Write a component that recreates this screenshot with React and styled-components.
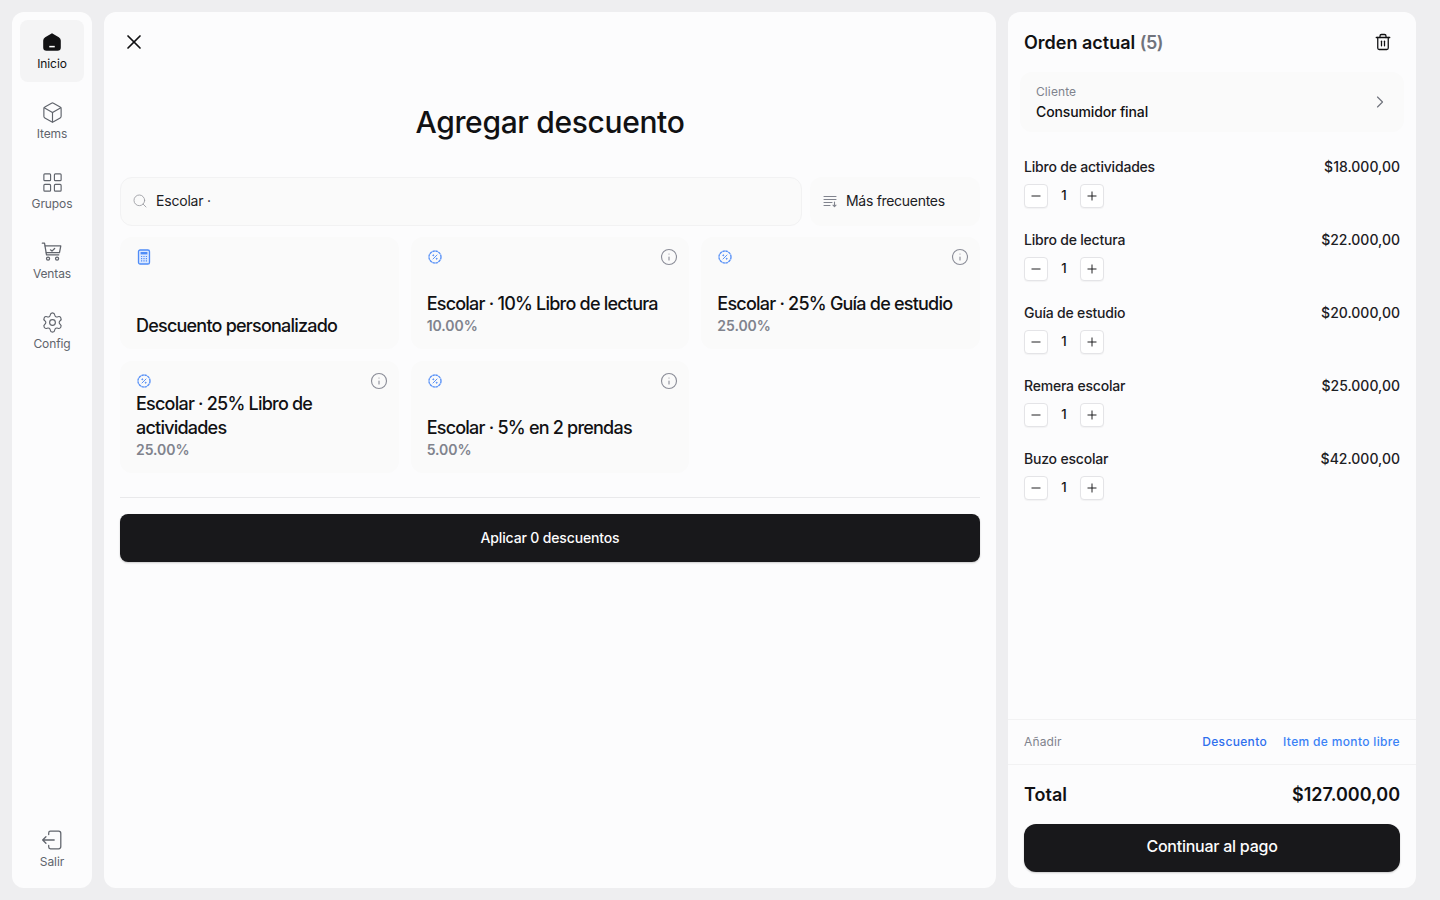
import React from "react";
import styled, { createGlobalStyle } from "styled-components";
import { Box, LayoutGrid, Settings, Search, X, Trash2, ChevronRight, Minus, Plus, Info } from "lucide-react";

const GlobalStyle = createGlobalStyle`
  * { box-sizing: border-box; }
  html, body { margin: 0; height: 100%; }
  body {
    background: #eeeef0;
    font-family: Inter, "Liberation Sans", sans-serif;
    color: #111113;
  }
`;

const Page = styled.div`
  display: grid;
  grid-template-columns: 80px 892px 408px;
  gap: 12px;
  width: 1440px;
  height: 900px;
  padding: 12px 24px 12px 12px;
`;

const Sidebar = styled.nav`
  background: #fcfcfd;
  border-radius: 12px;
  padding: 8px;
  display: flex;
  flex-direction: column;
  gap: 8px;
`;

const NavItem = styled.div`
  height: 62px;
  border-radius: 8px;
  display: flex;
  flex-direction: column;
  align-items: center;
  justify-content: center;
  gap: 4px;
  padding-top: 2px;
  font-size: 12px;
  line-height: 16px;
  letter-spacing: -0.1px;
  color: ${(p) => (p.$active ? "#111113" : "#60646c")};
  background: ${(p) => (p.$active ? "#f4f4f5" : "transparent")};
  &:last-child { margin-top: auto; }
`;

const NavIcon = styled.div`
  height: 20px;
  display: flex;
  align-items: center;
  justify-content: center;
`;

const Main = styled.main`
  background: #fcfcfd;
  border-radius: 12px;
  padding: 16px;
  display: flex;
  flex-direction: column;
`;

const CloseButton = styled.div`
  width: 28px;
  height: 28px;
  display: flex;
  align-items: center;
  justify-content: center;
`;

const Title = styled.h1`
  margin: 48px 0 37px;
  font-size: 30px;
  line-height: 36px;
  font-weight: 500;
  letter-spacing: -0.35px;
  text-align: center;
`;

const Filters = styled.div`
  display: flex;
  gap: 8px;
  height: 49px;
`;

const SearchBox = styled.div`
  flex: 1;
  display: flex;
  align-items: center;
  gap: 8px;
  padding: 0 0 2px 11px;
  background: #fafafa;
  border: 1px solid #f2f2f3;
  border-radius: 12px;
  font-size: 14px;
  letter-spacing: -0.2px;
  color: #1c2024;
  svg { color: #9a9ba1; }
`;

const SortBox = styled.div`
  width: 170px;
  display: flex;
  align-items: center;
  gap: 8px;
  padding: 0 0 2px 12px;
  background: #fafafa;
  border-radius: 12px;
  font-size: 14px;
  letter-spacing: -0.3px;
  color: #1c2024;
`;

const CardGrid = styled.div`
  display: grid;
  grid-template-columns: repeat(3, 1fr);
  grid-auto-rows: 112px;
  gap: 12px;
  margin-top: 11px;
  padding-bottom: 24px;
  border-bottom: 1px solid #e9e9eb;
`;

const Card = styled.div`
  background: #fafafa;
  border-radius: 12px;
  padding: 12px 11px ${(p) => (p.$custom ? "11px" : "13px")} 16px;
  display: flex;
  flex-direction: column;
`;

const CardTop = styled.div`
  display: flex;
  justify-content: space-between;
  align-items: center;
  height: 16px;
  svg.info { color: #8b8d98; }
`;

const CardBody = styled.div`
  margin-top: auto;
`;

const CardName = styled.div`
  font-size: 18px;
  line-height: 24px;
  font-weight: 500;
  letter-spacing: -0.78px;
`;

const CardValue = styled.div`
  font-size: 14px;
  line-height: 20px;
  font-weight: 600;
  letter-spacing: -0.05px;
  color: #80838d;
`;

const ApplyButton = styled.button`
  margin-top: 16px;
  height: 48px;
  flex: none;
  border: 0;
  border-radius: 8px;
  padding: 0 0 2px;
  background: #18181b;
  color: #fcfcfd;
  font: 500 14px Inter, sans-serif;
  letter-spacing: -0.15px;
  box-shadow: 0 1px 2px rgba(0, 0, 0, 0.2);
`;

const Order = styled.aside`
  background: #fcfcfd;
  border-radius: 12px;
  display: flex;
  flex-direction: column;
`;

const OrderHeader = styled.div`
  height: 60px;
  padding: 0 24px 0 16px;
  display: flex;
  align-items: center;
  justify-content: space-between;
`;

const OrderTitle = styled.h2`
  margin: 0;
  font-size: 18px;
  font-weight: 600;
  span { color: #70737c; letter-spacing: -0.5px; }
`;

const ClientRow = styled.div`
  margin: 0 12px;
  height: 60px;
  padding: 0 14px 0 16px;
  background: #fafafa;
  border-radius: 12px;
  display: flex;
  align-items: center;
  justify-content: space-between;
  svg { color: #70737c; }
`;

const ClientLabel = styled.div`
  font-size: 12px;
  line-height: 20px;
  letter-spacing: 0.1px;
  color: #80838d;
`;

const ClientName = styled.div`
  font-size: 14px;
  line-height: 20px;
  font-weight: 500;
  letter-spacing: -0.13px;
`;

const Items = styled.div`
  flex: 1;
  padding: 25px 16px 0;
  display: flex;
  flex-direction: column;
  gap: 22px;
`;

const ItemHead = styled.div`
  display: flex;
  justify-content: space-between;
  font-size: 14px;
  line-height: 20px;
  font-weight: 500;
  color: #1c2024;
  span:first-child { letter-spacing: -0.2px; }
`;

const Stepper = styled.div`
  display: flex;
  align-items: center;
  margin-top: 7px;
`;

const StepButton = styled.div`
  width: 24px;
  height: 24px;
  border: 1px solid #e4e4e7;
  border-radius: 4px;
  background: #fff;
  display: flex;
  align-items: center;
  justify-content: center;
  box-shadow: 0 1px 1px rgba(0, 0, 0, 0.04);
`;

const Quantity = styled.div`
  width: 32px;
  padding-bottom: 2px;
  text-align: center;
  font-size: 13px;
  font-weight: 500;
`;

const AddRow = styled.div`
  height: 46px;
  padding: 0 16px 2px;
  border-top: 1px solid #f2f2f3;
  border-bottom: 1px solid #f2f2f3;
  display: flex;
  align-items: center;
  gap: 16px;
  font-size: 12px;
  span:first-child { margin-right: auto; color: #80838d; letter-spacing: 0.15px; }
`;

const AddLink = styled.span`
  color: ${(p) => (p.$strong ? "#2f6fed" : "#3b82f6")};
  font-weight: 500;
  letter-spacing: 0.34px;
`;

const Checkout = styled.div`
  padding: 0 16px 16px;
`;

const TotalRow = styled.div`
  height: 59px;
  display: flex;
  align-items: center;
  justify-content: space-between;
  font-size: 18px;
  font-weight: 600;
  color: #111113;
`;

const PayButton = styled.button`
  width: 100%;
  height: 48px;
  border: 0;
  border-radius: 12px;
  padding: 0 0 4px;
  background: #18181b;
  color: #fcfcfd;
  font: 500 16px Inter, sans-serif;
  letter-spacing: -0.25px;
  box-shadow: 0 1px 2px rgba(0, 0, 0, 0.2);
`;

const HomeIcon = () => (
  <svg width="22" height="22" viewBox="0 0 20 20">
    <path d="M10 2 L16.2 5.6 Q18 6.6 18 8.6 V15 Q18 18 15 18 H5 Q2 18 2 15 V8.6 Q2 6.6 3.8 5.6 Z" fill="#111113" />
    <rect x="7.5" y="13.5" width="5" height="1.4" fill="#fff" />
  </svg>
);

const CartIcon = () => (
  <svg width="22" height="22" viewBox="0 0 20 20" fill="none" stroke="#60646c" strokeWidth="1.15" strokeLinecap="round" strokeLinejoin="round">
    <path d="M1.2 2 H3.2 L5 12.6 H16.2" />
    <path d="M3.8 4.5 H18 L16.8 10.6 H4.8" />
    <path d="M8.6 8 L10 9.2 L12.4 6.8" />
    <circle cx="6.4" cy="16" r="1.4" />
    <circle cx="14.6" cy="16" r="1.4" />
  </svg>
);

const LogoutIcon = () => (
  <svg width="22" height="22" viewBox="0 0 20 20" fill="none" stroke="#60646c" strokeWidth="1.15" strokeLinecap="round" strokeLinejoin="round">
    <path d="M7 5 V3.6 Q7 2 8.6 2 H16 Q18 2 18 4 V16 Q18 18 16 18 H8.6 Q7 18 7 16.4 V15" />
    <path d="M12 10 H1.5 M4.5 7 L1.5 10 L4.5 13" />
  </svg>
);

const SortIcon = () => (
  <svg width="16" height="16" viewBox="0 0 16 16" fill="none" stroke="#80838d" strokeWidth="1.1" strokeLinecap="round" strokeLinejoin="round">
    <path d="M2 3.5 H14 M2 6.5 H14 M2 9.5 H10 M2 12.5 H8" />
    <path d="M12.5 9 V13.5 M11 12.2 L12.5 13.7 L14 12.2" />
  </svg>
);

const CalculatorIcon = () => (
  <svg width="16" height="16" viewBox="0 0 16 16" fill="none">
    <rect x="2.5" y="1" width="11" height="14" rx="1.6" fill="#dbe8ff" stroke="#4f8cf7" strokeWidth="1.3" />
    <rect x="4.6" y="3" width="6.8" height="2.4" fill="#4f8cf7" />
    <path d="M5 7.5 H6.2 M7.4 7.5 H8.6 M9.8 7.5 H11 M5 9.7 H6.2 M7.4 9.7 H8.6 M9.8 9.7 H11 M5 11.9 H6.2 M7.4 11.9 H8.6 M9.8 11.9 H11" stroke="#4f8cf7" strokeWidth="1.2" />
  </svg>
);

const DiscountIcon = () => (
  <svg width="16" height="16" viewBox="0 0 16 16" fill="none" stroke="#5b93f7">
    <circle cx="8" cy="8" r="6" strokeWidth="1.4" strokeDasharray="2.6 0.5" />
    <path d="M10 6 L6 10" strokeWidth="1" strokeLinecap="round" />
    <circle cx="6.3" cy="6.3" r="0.5" fill="#2f6fed" />
    <circle cx="9.7" cy="9.7" r="0.5" fill="#2f6fed" />
  </svg>
);

const navItems = [
  { label: "Inicio", icon: <HomeIcon />, active: true },
  { label: "Items", icon: <Box size={23} strokeWidth={1.2} /> },
  { label: "Grupos", icon: <LayoutGrid size={23} strokeWidth={1.2} /> },
  { label: "Ventas", icon: <CartIcon /> },
  { label: "Config", icon: <Settings size={23} strokeWidth={1.2} /> },
  { label: "Salir", icon: <LogoutIcon /> },
];

const discounts = [
  { name: "Descuento personalizado", custom: true },
  { name: "Escolar · 10% Libro de lectura", value: "10.00%" },
  { name: "Escolar · 25% Guía de estudio", value: "25.00%" },
  { name: "Escolar · 25% Libro de actividades", value: "25.00%" },
  { name: "Escolar · 5% en 2 prendas", value: "5.00%" },
];

const orderItems = [
  { name: "Libro de actividades", price: "$18.000,00" },
  { name: "Libro de lectura", price: "$22.000,00" },
  { name: "Guía de estudio", price: "$20.000,00" },
  { name: "Remera escolar", price: "$25.000,00" },
  { name: "Buzo escolar", price: "$42.000,00" },
];

export default function App() {
  return (
    <Page>
      <GlobalStyle />
      <Sidebar>
        {navItems.map((item) => (
          <NavItem key={item.label} $active={item.active}>
            <NavIcon>{item.icon}</NavIcon>
            {item.label}
          </NavItem>
        ))}
      </Sidebar>

      <Main>
        <CloseButton>
          <X size={24} strokeWidth={1.7} />
        </CloseButton>
        <Title>Agregar descuento</Title>
        <Filters>
          <SearchBox>
            <Search size={16} strokeWidth={1.3} />
            Escolar ·
          </SearchBox>
          <SortBox>
            <SortIcon />
            Más frecuentes
          </SortBox>
        </Filters>
        <CardGrid>
          {discounts.map((d) => (
            <Card key={d.name} $custom={d.custom}>
              <CardTop>
                {d.custom ? <CalculatorIcon /> : <DiscountIcon />}
                {!d.custom && <Info className="info" size={18} strokeWidth={1.5} />}
              </CardTop>
              <CardBody>
                <CardName>{d.name}</CardName>
                {d.value && <CardValue>{d.value}</CardValue>}
              </CardBody>
            </Card>
          ))}
        </CardGrid>
        <ApplyButton>Aplicar 0 descuentos</ApplyButton>
      </Main>

      <Order>
        <OrderHeader>
          <OrderTitle>
            Orden actual <span>(5)</span>
          </OrderTitle>
          <Trash2 size={18} strokeWidth={1.7} />
        </OrderHeader>
        <ClientRow>
          <div>
            <ClientLabel>Cliente</ClientLabel>
            <ClientName>Consumidor final</ClientName>
          </div>
          <ChevronRight size={20} strokeWidth={1.4} />
        </ClientRow>
        <Items>
          {orderItems.map((item) => (
            <div key={item.name}>
              <ItemHead>
                <span>{item.name}</span>
                <span>{item.price}</span>
              </ItemHead>
              <Stepper>
                <StepButton>
                  <Minus size={14} strokeWidth={1.6} />
                </StepButton>
                <Quantity>1</Quantity>
                <StepButton>
                  <Plus size={14} strokeWidth={1.6} />
                </StepButton>
              </Stepper>
            </div>
          ))}
        </Items>
        <AddRow>
          <span>Añadir</span>
          <AddLink $strong>Descuento</AddLink>
          <AddLink>Item de monto libre</AddLink>
        </AddRow>
        <Checkout>
          <TotalRow>
            <span>Total</span>
            <span>$127.000,00</span>
          </TotalRow>
          <PayButton>Continuar al pago</PayButton>
        </Checkout>
      </Order>
    </Page>
  );
}
